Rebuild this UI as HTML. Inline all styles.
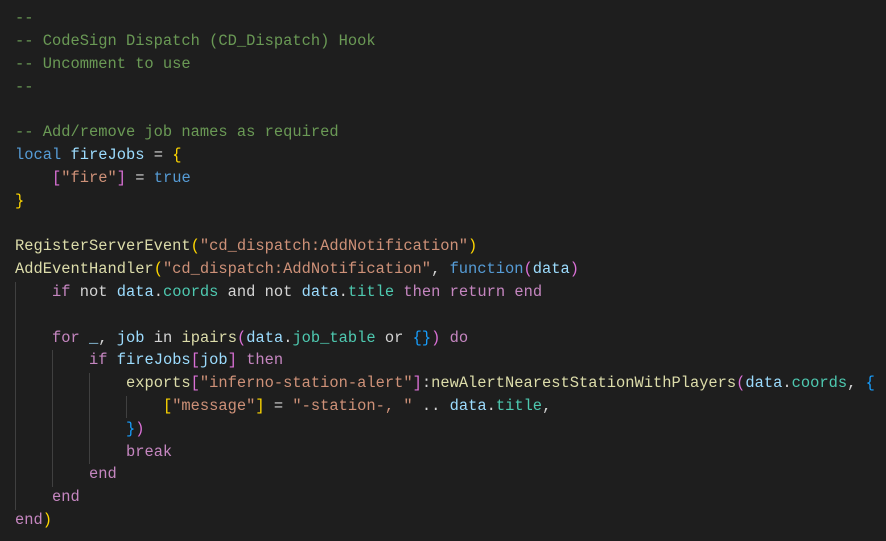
<!DOCTYPE html>
<html><head><meta charset="utf-8"><style>
html,body{margin:0;padding:0;background:#1e1e1e;width:886px;height:541px;overflow:hidden}
pre{position:absolute;left:15px;top:7.4px;margin:0;font-family:"Liberation Mono",monospace;font-size:15.42px;line-height:22.8px;color:#d4d4d4}
.c{color:#6a9955}.k{color:#569cd6}.p{color:#c586c0}.s{color:#ce9178}.v{color:#9cdcfe}.f{color:#dcdcaa}.t{color:#4ec9b0}
.b1{color:#ffd700}.b2{color:#da70d6}.b3{color:#179fff}
.g{position:absolute;width:1px;background:#404040}
</style></head><body>
<div class="g" style="left:15px;top:281.6px;height:228px"></div>
<div class="g" style="left:52px;top:350px;height:136.8px"></div>
<div class="g" style="left:89px;top:372.8px;height:91.2px"></div>
<div class="g" style="left:126px;top:395.6px;height:22.8px"></div>
<pre><span class="c">--
-- CodeSign Dispatch (CD_Dispatch) Hook
-- Uncomment to use
--</span>

<span class="c">-- Add/remove job names as required</span>
<span class="k">local</span> <span class="v">fireJobs</span> = <span class="b1">{</span>
    <span class="b2">[</span><span class="s">"fire"</span><span class="b2">]</span> = <span class="k">true</span>
<span class="b1">}</span>

<span class="f">RegisterServerEvent</span><span class="b1">(</span><span class="s">"cd_dispatch:AddNotification"</span><span class="b1">)</span>
<span class="f">AddEventHandler</span><span class="b1">(</span><span class="s">"cd_dispatch:AddNotification"</span>, <span class="k">function</span><span class="b2">(</span><span class="v">data</span><span class="b2">)</span>
    <span class="p">if</span> not <span class="v">data</span>.<span class="t">coords</span> and not <span class="v">data</span>.<span class="t">title</span> <span class="p">then</span> <span class="p">return</span> <span class="p">end</span>

    <span class="p">for</span> <span class="v">_</span>, <span class="v">job</span> in <span class="f">ipairs</span><span class="b2">(</span><span class="v">data</span>.<span class="t">job_table</span> or <span class="b3">{}</span><span class="b2">)</span> <span class="p">do</span>
        <span class="p">if</span> <span class="v">fireJobs</span><span class="b2">[</span><span class="v">job</span><span class="b2">]</span> <span class="p">then</span>
            <span class="f">exports</span><span class="b2">[</span><span class="s">"inferno-station-alert"</span><span class="b2">]</span>:<span class="f">newAlertNearestStationWithPlayers</span><span class="b2">(</span><span class="v">data</span>.<span class="t">coords</span>, <span class="b3">{</span>
                <span class="b1">[</span><span class="s">"message"</span><span class="b1">]</span> = <span class="s">"-station-, "</span> .. <span class="v">data</span>.<span class="t">title</span>,
            <span class="b3">}</span><span class="b2">)</span>
            <span class="p">break</span>
        <span class="p">end</span>
    <span class="p">end</span>
<span class="p">end</span><span class="b1">)</span></pre>
</body></html>
